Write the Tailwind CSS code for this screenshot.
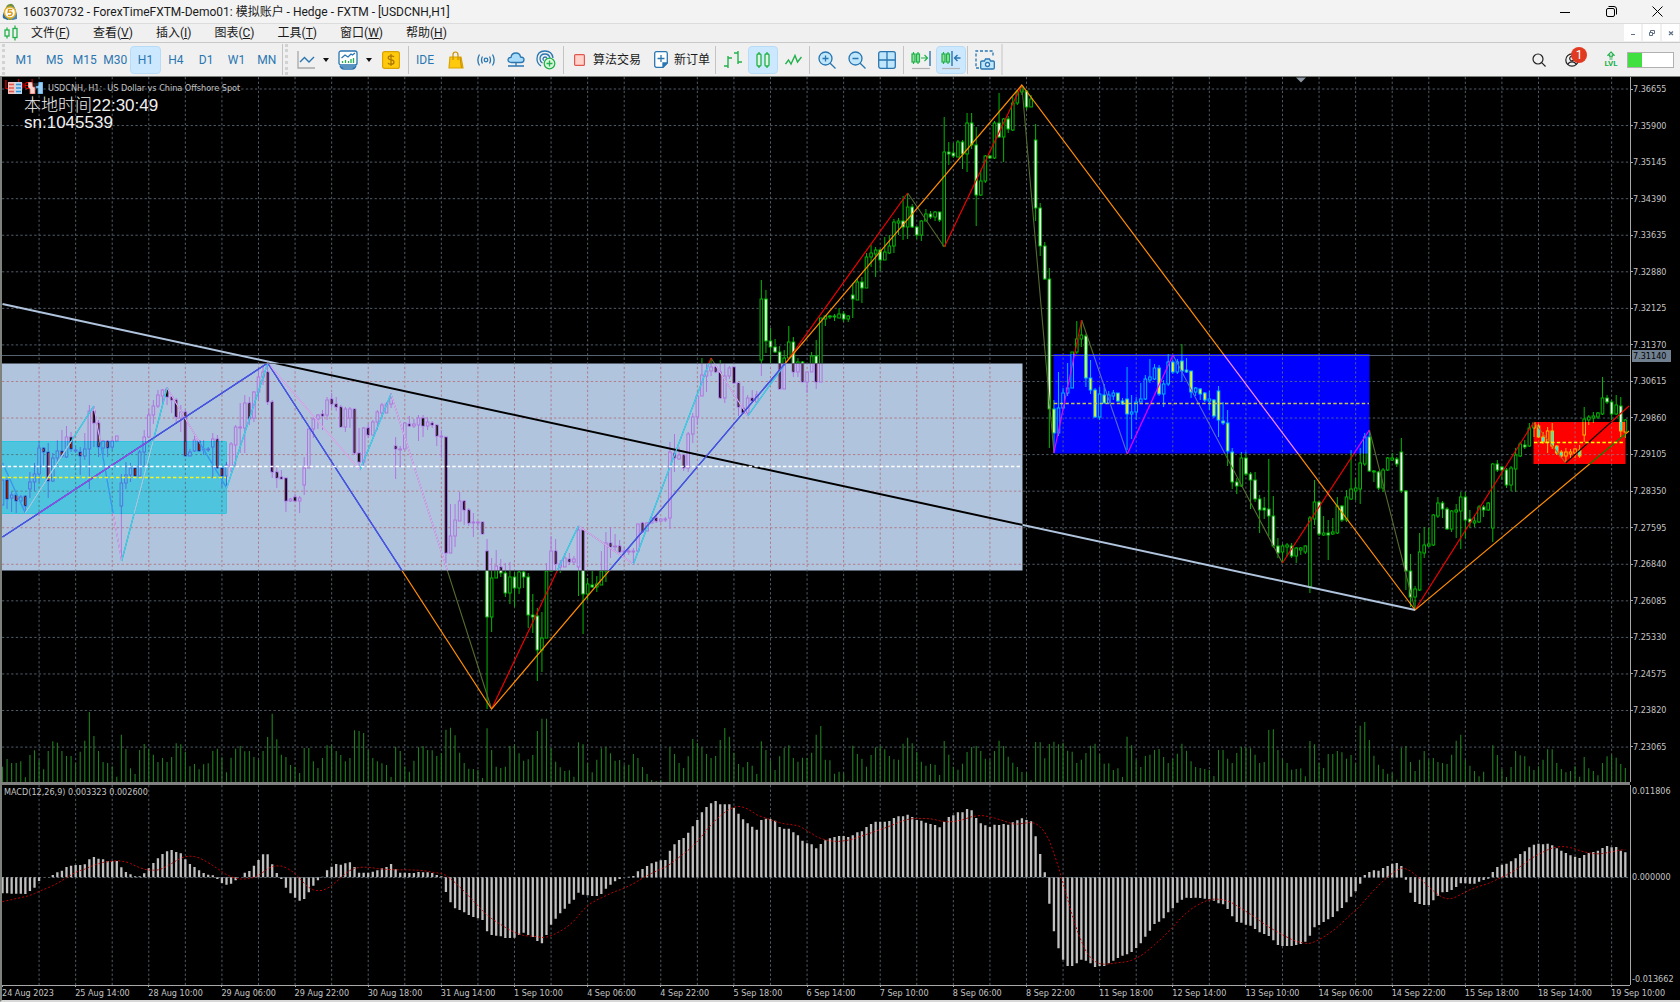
<!DOCTYPE html>
<html lang="zh-CN">
<head>
  <meta charset="UTF-8">
  <meta name="viewport" content="width=device-width, initial-scale=1.0">
  <title>160370732 - ForexTimeFXTM-Demo01: 模拟账户 - Hedge - FXTM - [USDCNH,H1]</title>
  <script src="https://cdn.jsdelivr.net/npm/@tailwindcss/browser@4"></script>
</head>
<body class="h-screen flex flex-col overflow-hidden bg-[#f0f0f0] font-['Roboto','Noto_Sans_CJK_SC',sans-serif] text-xs text-[#1a1a1a]">

  <!-- Title bar -->
  <header class="h-6 shrink-0 flex items-center bg-[#f3f3f3] border-b border-[#dcdcdc] pl-[2px]">
    <svg class="w-4 h-[18px] mr-[5px]" viewBox="0 0 16 18">
      <path d="M3 8 Q4 1 8 1 Q10 0 12 3 Q13 5 14 9 L15 15 Q8 19 1 15 Z" fill="#6f8f3c" />
      <path d="M11 2 Q14 6 15 12 L15 16 L10 17 Z" fill="#4a86b8" />
      <path d="M3 7 Q0 12 1 15 L6 17 L6 9 Z" fill="#2e6da4" />
      <circle cx="8" cy="9.500" r="5.600" fill="#fff" stroke="#e3b02c" stroke-width="1.500" />
      <path d="M10.300 6.400 H6.600 L6.200 9.400 Q10.300 8.300 10.100 10.800 Q9.600 13 6 12.200" fill="none" stroke="#d89a1a" stroke-width="1.500" />
    </svg>
    <h1 class="text-[12px] whitespace-nowrap">160370732 - ForexTimeFXTM-Demo01: 模拟账户 - Hedge - FXTM - [USDCNH,H1]</h1>
    <div class="ml-auto flex h-full">
      <button class="w-[46px] flex items-center justify-center" aria-label="最小化"><svg class="w-[10px] h-[10px]" viewBox="0 0 10 10"><path d="M0 5.500H10" stroke="#000" /></svg></button>
      <button class="w-[46px] flex items-center justify-center" aria-label="还原"><svg class="w-[11px] h-[11px]" viewBox="0 0 11 11" fill="none" stroke="#000"><rect x=".5" y="2.500" width="8" height="8" rx="1.500" /><path d="M2.500 .5H8Q10.500 .5 10.500 3V8.500" /></svg></button>
      <button class="w-[46px] flex items-center justify-center" aria-label="关闭"><svg class="w-[11px] h-[11px]" viewBox="0 0 11 11" stroke="#000"><path d="M.5 .5L10.500 10.500M10.500 .5L.5 10.500" /></svg></button>
    </div>
  </header>

  <!-- Menu bar -->
  <nav class="h-[19px] shrink-0 flex items-center border-b border-[#c8c8c8] pl-1">
    <svg class="w-[14px] h-4 mr-[13px]" viewBox="0 0 14 16" fill="none" stroke="#22b14c" stroke-width="1.300">
      <path d="M3 2.500V5M3 11V13.500M11 .5V3.500M11 12.500V15.500" /><rect x="1" y="5" width="4" height="6" /><rect x="9" y="3.500" width="4" height="9" />
    </svg>
    <div class="flex gap-[23px] whitespace-nowrap">
      <button>文件(<u>F</u>)</button>
      <button>查看(<u>V</u>)</button>
      <button>插入(<u>I</u>)</button>
      <button>图表(<u>C</u>)</button>
      <button>工具(<u>T</u>)</button>
      <button>窗口(<u>W</u>)</button>
      <button>帮助(<u>H</u>)</button>
    </div>
    <div class="ml-auto flex gap-[2px] h-full pr-px">
      <button class="w-[17px] h-[17px] bg-white flex items-center justify-center" aria-label="最小化图表"><svg class="w-2 h-2" viewBox="0 0 8 8"><path d="M2 5.500H6" stroke="#5d7085" /></svg></button>
      <button class="w-[17px] h-[17px] bg-white flex items-center justify-center" aria-label="还原图表"><svg class="w-2 h-2" viewBox="0 0 8 8" fill="none" stroke="#5d7085"><path d="M2.500 3V1.500H6.500V4.500H5M1.500 3.500H4.500V6.500H1.500Z" /></svg></button>
      <button class="w-[17px] h-[17px] bg-white flex items-center justify-center" aria-label="关闭图表"><svg class="w-2 h-2" viewBox="0 0 8 8" stroke="#5d7085" stroke-width="1.300"><path d="M2 2.500L6 6M6 2.500L2 6" /></svg></button>
    </div>
  </nav>

  <!-- Toolbars -->
  <div class="h-[33px] shrink-0 flex items-center">
    <div class="w-[7px] h-[31px] border-l-3 border-dotted border-[#d2d2d2] ml-[2px]"></div>
    <div class="grid grid-cols-9 w-[273px] text-[#2a76b0]">
      <button class="h-7">M1</button>
      <button class="h-7">M5</button>
      <button class="h-7">M15</button>
      <button class="h-7">M30</button>
      <button class="h-7 rounded-sm bg-[#cce8ff] border border-[#b8dcf8]">H1</button>
      <button class="h-7">H4</button>
      <button class="h-7">D1</button>
      <button class="h-7">W1</button>
      <button class="h-7">MN</button>
    </div>
    <div class="w-[9px] h-[31px] border-l border-[#c4c4c4] pl-[2px]"><div class="h-full border-l-3 border-dotted border-[#d2d2d2]"></div></div>

    <button class="w-[30px] flex justify-center" aria-label="折线"><svg class="w-5 h-5" viewBox="0 0 20 20" fill="none"><path d="M2 1V18H19" stroke="#a8a8a8" stroke-width="1.300" /><path d="M4 12L8.500 7.500L13 12L18 7" stroke="#2a76b0" stroke-width="1.400" /></svg></button>
    <button class="w-[10px] flex justify-center" aria-label="更多线型"><svg class="w-[6px] h-1" viewBox="0 0 6 4"><path d="M0 0H6L3 4Z" fill="#111" /></svg></button>
    <button class="w-[33px] flex justify-center" aria-label="指标"><svg class="w-5 h-5" viewBox="0 0 20 20" fill="none" stroke="#2a76b0" stroke-width="1.300"><rect x="1" y="1" width="18" height="14" rx="2" fill="#fff" /><path d="M2 15.500Q3 19 6 19H14Q17 19 18 15.500M3 17H17" /><path d="M3.500 8L7 5L10 7L13 4L14.500 5L17 3" /><path d="M4.500 13V11M7.500 13V10M10.500 13V11M13 13V9M15.500 13V8" stroke="#22b14c" /></svg></button>
    <button class="w-[10px] flex justify-center" aria-label="更多指标"><svg class="w-[6px] h-1" viewBox="0 0 6 4"><path d="M0 0H6L3 4Z" fill="#111" /></svg></button>
    <button class="w-[34px] flex justify-center" aria-label="金额"><svg class="w-[18px] h-[18px]" viewBox="0 0 18 18" fill="none"><rect x=".6" y=".6" width="16.800" height="16.800" rx="2" fill="#ffc90e" stroke="#d9a300" stroke-width="1.200" /><path d="M12 6Q11.500 4.800 9 4.800Q6.200 4.800 6.200 6.800Q6.200 8.500 9 8.900Q12 9.300 12 11.200Q12 13.200 9 13.200Q6.400 13.200 6 11.800M9 3V15" stroke="#a87400" stroke-width="1.200" /></svg></button>
    <div class="w-px h-7 bg-[#c4c4c4]"></div>
    <button class="w-8 text-[#2a76b0]">IDE</button>
    <button class="w-[30px] flex justify-center" aria-label="市场"><svg class="w-4 h-[18px]" viewBox="0 0 16 18" fill="none"><path d="M2 6H13L15 17H1Z" fill="#ffc90e" stroke="#d9a300" stroke-width="1.200" /><path d="M5 9V4Q5 1 7.500 1Q10 1 10 4V9M12 6L13.500 17" stroke="#c99000" stroke-width="1.200" /></svg></button>
    <button class="w-[30px] flex justify-center" aria-label="信号"><svg class="w-[18px] h-3" viewBox="0 0 18 12" fill="none" stroke="#2a76b0" stroke-width="1.300"><circle cx="9" cy="6" r="1.800" /><path d="M5.500 2.500Q3.500 6 5.500 9.500M12.500 2.500Q14.500 6 12.500 9.500M2.500 .5Q-.8 6 2.500 11.500M15.500 .5Q18.800 6 15.500 11.500" /></svg></button>
    <button class="w-[30px] flex justify-center" aria-label="云"><svg class="w-[18px] h-4" viewBox="0 0 18 16" fill="none" stroke="#2a76b0" stroke-width="1.300"><path d="M4.500 10.500Q1 10.500 1 7.800Q1 5.500 4 5.300Q4.500 1 9 1Q13 1 13.500 5Q17 5.200 17 7.800Q17 10.500 14 10.500Z" fill="#a9dcfa" /><path d="M9 10.500V14M1 14H7M11 14H17M7 14H11" /></svg></button>
    <button class="w-[30px] flex justify-center" aria-label="VPS"><svg class="w-5 h-5" viewBox="0 0 20 20" fill="none" stroke="#2a76b0" stroke-width="1.300"><path d="M5 16Q1 13.500 1 9Q1 1 9 1Q16 1 17 8M6.500 13Q4 11.500 4 9Q4 4 9 4Q13 4 14 8M8 10.500Q6.800 10 7 9Q7.200 7 9 7Q10.500 7 11 8.500" /><circle cx="13.500" cy="13.500" r="5.300" fill="#d9f7dc" stroke="#22b14c" /><path d="M13.500 10.500V16.500M10.500 13.500H16.500" stroke="#22b14c" /></svg></button>
    <div class="w-px h-7 bg-[#c4c4c4] ml-[2px] mr-[10px]"></div>
    <button class="flex items-center gap-2 whitespace-nowrap"><svg class="w-[11px] h-3" viewBox="0 0 11 12"><rect x=".6" y=".6" width="9.800" height="10.800" rx="1" fill="#ffd3cc" stroke="#e2574c" stroke-width="1.200" /></svg>算法交易</button>
    <button class="flex items-center gap-[6px] whitespace-nowrap ml-[13px]"><svg class="w-[14px] h-[17px]" viewBox="0 0 14 17" fill="none" stroke="#2a76b0" stroke-width="1.300"><path d="M2.500 .7H11.500Q13.300 .7 13.300 2.500V12L9 16.300H2.500Q.7 16.300 .7 14.500V2.500Q.7 .7 2.500 .7Z" fill="#fff" /><path d="M7 4V11M3.500 7.500H10.500" /><path d="M13 12L9 16V12Z" fill="#2a76b0" /></svg>新订单</button>
    <div class="w-px h-7 bg-[#c4c4c4] ml-[5px] mr-[2px]"></div>
    <button class="w-[30px] flex justify-center" aria-label="柱状图"><svg class="w-[18px] h-[17px]" viewBox="0 0 18 17" fill="none" stroke="#22b14c" stroke-width="1.400"><path d="M4 5V17M4 7H8M0 15H4M14 0V13M10 2H14M14 11H18" /></svg></button>
    <button class="w-[30px] h-7 flex items-center justify-center rounded-sm bg-[#cce8ff] border border-[#b8dcf8]" aria-label="蜡烛图"><svg class="w-[14px] h-4" viewBox="0 0 14 16" fill="none" stroke="#22b14c" stroke-width="1.300"><path d="M3 0V2M3 14V16M11 0V2M11 14V16" /><rect x="1" y="2" width="4" height="12" rx="1" fill="#dff5df" /><rect x="9" y="2" width="4" height="12" rx="1" fill="#dff5df" /></svg></button>
    <button class="w-[30px] flex justify-center" aria-label="线图"><svg class="w-[17px] h-3" viewBox="0 0 17 12" fill="none" stroke="#22b14c" stroke-width="1.400"><path d="M.5 10L3.500 6L6 10L10 1.500L12.500 8L16.500 3" /></svg></button>
    <div class="w-px h-7 bg-[#c4c4c4] ml-px mr-[2px]"></div>
    <button class="w-[30px] flex justify-center" aria-label="放大"><svg class="w-[18px] h-[18px]" viewBox="0 0 18 18" fill="none" stroke="#2a76b0" stroke-width="1.300"><circle cx="7.500" cy="7.500" r="6.500" fill="#bfe6fb" /><path d="M12.200 12.200L17.500 17.500M4.500 7.500H10.500M7.500 4.500V10.500" /></svg></button>
    <button class="w-[30px] flex justify-center" aria-label="缩小"><svg class="w-[18px] h-[18px]" viewBox="0 0 18 18" fill="none" stroke="#2a76b0" stroke-width="1.300"><circle cx="7.500" cy="7.500" r="6.500" fill="#bfe6fb" /><path d="M12.200 12.200L17.500 17.500M4.500 7.500H10.500" /></svg></button>
    <button class="w-[30px] flex justify-center" aria-label="平铺窗口"><svg class="w-[18px] h-[18px]" viewBox="0 0 18 18" fill="none" stroke="#2a76b0" stroke-width="1.300"><rect x=".7" y=".7" width="16.600" height="16.600" rx="2" fill="#bfe6fb" /><path d="M9 1V17M1 9H17" /></svg></button>
    <div class="w-px h-7 bg-[#c4c4c4] ml-px mr-[2px]"></div>
    <button class="w-[30px] flex justify-center" aria-label="自动滚动"><svg class="w-5 h-5" viewBox="0 0 20 20" fill="none" stroke="#22b14c" stroke-width="1.200"><path d="M2.500 2V4M2.500 12V14M7 2V4M7 12V14" /><rect x="1" y="4" width="3" height="8" fill="#8fe09a" /><rect x="5.500" y="4" width="3" height="8" fill="#8fe09a" /><path d="M10 8H16M13.500 5L16.500 8L13.500 11" /><path d="M19 1V16" stroke="#2a76b0" stroke-width="1.400" /><path d="M1 18.500H19" stroke="#b4b4b4" /></svg></button>
    <button class="w-[30px] h-7 flex items-center justify-center rounded-sm bg-[#cce8ff] border border-[#b8dcf8]" aria-label="图表平移"><svg class="w-5 h-5" viewBox="0 0 20 20" fill="none" stroke="#22b14c" stroke-width="1.200"><path d="M2.500 2V4M2.500 12V14M7 2V4M7 12V14" /><rect x="1" y="4" width="3" height="8" fill="#8fe09a" /><rect x="5.500" y="4" width="3" height="8" fill="#8fe09a" /><path d="M11 1V16M19.500 8H13.500M16.500 5L13.500 8L16.500 11" stroke="#2a76b0" stroke-width="1.400" /><path d="M1 18.500H19" stroke="#b4b4b4" /></svg></button>
    <div class="w-px h-7 bg-[#c4c4c4] ml-px mr-[2px]"></div>
    <button class="w-[30px] flex justify-center" aria-label="截图"><svg class="w-5 h-5" viewBox="0 0 20 20" fill="none" stroke="#2a76b0" stroke-width="1.300"><path d="M4 18H1V1H18V7" stroke-dasharray="3 1.800" /><path d="M7 11H9.500L10.500 9H14.500L15.500 11H18Q19.300 11 19.300 12V18Q19.300 19 18 19H7Q5.700 19 5.700 18V12Q5.700 11 7 11Z" fill="#bfe6fb" /><circle cx="12.500" cy="14.500" r="2" fill="#fff" /></svg></button>
    <div class="w-[2px] h-[31px] bg-[#dadada] ml-px"></div>

    <div class="ml-auto flex items-center pr-[6px]">
      <button class="w-8 flex justify-center" aria-label="搜索"><svg class="w-[14px] h-[14px]" viewBox="0 0 14 14" fill="none" stroke="#222" stroke-width="1.200"><circle cx="6" cy="6" r="5" /><path d="M9.700 9.700L13.500 13.500" /></svg></button>
      <button class="relative w-[33px] flex justify-center" aria-label="通知">
        <svg class="w-[14px] h-[14px]" viewBox="0 0 14 14" fill="none" stroke="#222" stroke-width="1.200"><circle cx="7" cy="7" r="6.200" /><circle cx="7" cy="5.500" r="2.300" /><path d="M2.800 11.500Q4 8.800 7 8.800Q10 8.800 11.200 11.500" /></svg>
        <span class="absolute left-[16px] -top-[6px] w-4 h-4 rounded-full bg-[#e13a22] text-white text-[12px] leading-4 text-center">1</span>
      </button>
      <button class="ml-[11px] w-[24px] flex flex-col items-center text-[#22b14c]" aria-label="等级">
        <svg class="w-2 h-[9px]" viewBox="0 0 8 9" fill="none" stroke="#22b14c" stroke-width="1.200"><path d="M4 1L7.200 4.200H5.200V5.800H2.800V4.200H.8ZM2.500 8H5.500" /></svg>
        <span class="text-[8px] leading-2 font-bold">LVL</span>
      </button>
      <div class="ml-1 w-[47px] h-4 border border-[#b0b0b0] bg-white"><div class="h-full w-[14px] bg-[#3fe03f]"></div></div>
    </div>
  </div>

  <!-- Chart window -->
  <main class="flex-1 min-h-0 flex flex-col bg-black border-t border-l-2 border-[#7d827d] border-b-2 border-b-[#d8d8d8] font-['DejaVu_Sans_Condensed','DejaVu_Sans',sans-serif] text-[9px] leading-3 text-[#c4c4c4]">
    <section class="flex-[705_1_0] min-h-0 flex">
      <div class="relative flex-1 min-w-0">
        <svg id="priceChart" class="absolute inset-0 w-full h-full" viewBox="2 77 1628 705" preserveAspectRatio="none"></svg>
        <div class="relative pt-[5px] pl-[2px]">
          <div class="relative flex items-center h-3">
            <span class="absolute left-0 -top-[3px] text-[12px] text-[#e00000]">Label</span>
            <svg class="relative w-[14px] h-3 ml-1" viewBox="0 0 14 12"><rect width="14" height="12" rx="1" fill="#f4f4f4" /><rect width="7" height="12" rx="1" fill="#f6c2bd" /><rect x="7" width="7" height="12" rx="1" fill="#b9dcf4" /><path d="M1 2.500H6M1 6H6M1 9.500H6" stroke="#e2574c" stroke-width="1.500" /><path d="M8 2.500H13M8 6H13M8 9.500H13" stroke="#3a8fd0" stroke-width="1.500" /></svg>
            <svg class="relative w-[15px] h-3 ml-[6px]" viewBox="0 0 15 12"><path d="M0 0H4L5 5H7V12H2V7L0 5Z" fill="#f8d5cf" stroke="#e2574c" stroke-width=".8" /><path d="M15 0H11L10 4H8V6H10V12H15Z" fill="#9bd0f5" stroke="#3a8fd0" stroke-width=".8" /><path d="M5 1H10V4H5Z" fill="#222" /></svg>
            <span class="ml-[5px] whitespace-pre">USDCNH, H1:  US Dollar vs China Offshore Spot</span>
          </div>
          <p class="pl-5 pt-[3px] font-['Liberation_Sans','Noto_Sans_CJK_SC',sans-serif] text-[17px] leading-[17px] text-[#f0f0f0]"><span class="font-light">本地时间</span>22:30:49<br>sn:1045539</p>
        </div>
      </div>
      <div class="relative w-[50px] border-l border-[#a8a8a8] flex flex-col justify-between pt-[6px] pb-[29px]">
        <div id="priceLabels" class="contents"></div>
        <span class="absolute left-px top-[38.700%] w-[39px] h-3 bg-[#708090] text-black pl-px">7.31140</span>
      </div>
    </section>
    <div class="h-[3px] shrink-0 bg-[#808080] mr-[50px]"></div>
    <section class="flex-[200_1_0] min-h-0 flex">
      <div class="relative flex-1 min-w-0">
        <svg id="macdChart" class="absolute inset-0 w-full h-full" viewBox="2 785 1628 200" preserveAspectRatio="none"></svg>
        <span class="relative block pl-[2px] pt-px">MACD(12,26,9) 0.003323 0.002600</span>
      </div>
      <div class="relative w-[50px] border-l border-[#a8a8a8] pl-px flex flex-col justify-between">
        <span>0.011806</span>
        <span class="absolute top-[43%]">0.000000</span>
        <span>-0.013662</span>
      </div>
    </section>
    <div class="h-[15px] shrink-0 mr-[50px] border-t border-[#a8a8a8]">
      <div id="timeLabels" class="flex whitespace-nowrap"></div>
    </div>
  </main>

  <script>
    const BAR_STEP = 4.5714;
    const barX = i => 2.5 + BAR_STEP * i;

    // One entry per H1 bar: high, body top, body bottom, low; "d" marks a bearish bar
    const CANDLES = `
480 480 505 505,478 480 499 509 d,492 495 498 512,493 495 501 513 d,495 497 501 503,495 496 506 513 d,472 482 489 498,463 474 482 491,442 448 474 482,447 448 452 467 d,
443 452 481 498 d,453 458 481 482,440 451 458 465,430 451 456 458 d,426 437 457 458,432 437 449 452 d,447 450 451 453 d,447 452 456 475 d,433 449 456 460,405 411 449 489,
406 411 423 447 d,420 423 447 457 d,440 441 448 455,440 441 448 457 d,438 441 447 450,436 436 441 441,474 483 506 561,462 475 483 489,463 468 475 482,465 468 476 478 d,
450 452 476 478,430 437 452 467,409 415 437 437,400 406 415 424,390 395 406 408,389 390 396 407,387 389 397 405 d,395 397 400 413 d,398 400 417 424 d,405 412 418 432,
409 412 456 456 d,449 452 456 456,436 440 451 452,440 441 451 452 d,440 449 450 455 d,447 449 450 452 d,433 439 447 478,435 439 468 469 d,467 468 476 487 d,462 465 476 488,
442 444 466 472,425 427 445 466,403 427 428 453 d,395 403 428 453,397 403 419 425 d,391 392 418 422,368 377 392 400,365 372 377 385,364 372 402 405 d,400 402 472 478 d,
466 472 478 488 d,470 477 479 479 d,478 478 501 512 d,498 499 501 502,494 497 501 502 d,496 498 501 513,457 468 485 495,429 429 468 468,417 419 429 438,414 415 419 429,
410 414 416 430 d,397 400 415 420,393 399 404 408 d,397 404 407 411 d,405 407 427 427 d,407 409 427 432,407 409 418 428,409 409 453 455 d,428 453 462 466 d,427 428 462 467,
424 428 435 438 d,420 422 435 435,410 412 422 430,403 405 413 419,402 404 413 413,393 398 404 408,437 446 449 479 d,446 449 450 467 d,422 423 449 449,416 424 426 427 d,
419 424 426 428,415 418 425 441,415 418 426 437 d,417 422 426 430,421 423 425 428 d,425 425 436 446 d,430 436 437 458 d,437 437 553 563 d,504 536 553 553,504 520 536 547,
492 501 521 521,500 501 510 525 d,508 510 523 526 d,513 522 523 537 d,521 522 523 530,522 522 534 534 d,539 551 617 709 d,558 578 617 632,550 566 578 578,559 567 573 577 d,
563 573 593 597 d,562 577 593 604,572 577 588 607 d,570 572 588 594,570 572 577 588 d,573 577 615 628 d,594 615 617 633 d,608 616 650 681 d,612 638 650 672,563 571 638 638,
536 551 571 571,539 551 564 570 d,560 564 567 573,553 558 567 567,553 559 562 565 d,556 559 562 565,526 530 567 596,530 530 594 634 d,578 584 594 600,570 585 587 588 d,
576 584 587 592,551 571 585 585,532 543 571 582,527 543 547 558 d,534 546 547 552 d,540 546 552 553 d,547 551 552 556,548 551 552 555 d,548 551 552 564 d,524 524 551 551,
522 523 532 533 d,522 523 531 531,515 518 523 523,515 518 521 523 d,518 519 521 523,517 519 520 522 d,442 452 518 529,434 453 458 472 d,447 455 459 460,455 455 468 471 d,
432 434 468 472,413 417 434 443,392 396 417 425,358 375 396 396,363 371 376 392,358 367 371 376,366 367 372 373 d,360 372 398 399 d,363 376 398 403,366 368 376 379,
367 367 383 384 d,383 383 407 416 d,386 408 413 414 d,395 398 413 416,390 398 401 402 d,391 395 402 402,280 299 360 376,290 299 341 353 d,328 341 347 363 d,339 347 352 353 d,
346 352 389 389 d,350 358 389 389,326 342 358 358,337 342 372 377 d,358 362 372 377,361 362 382 382 d,372 372 382 393,352 356 372 372,340 356 382 389 d,318 318 382 382,
316 316 319 326,315 316 317 319 d,314 316 317 321 d,308 314 318 318,311 314 319 322 d,315 316 319 322,283 295 299 318 d,279 282 300 300,277 282 288 303 d,253 257 288 288,
245 253 257 267,247 250 254 277,249 250 260 271 d,237 252 260 260,235 246 253 254,219 222 246 253,218 221 223 235,196 221 227 240 d,193 207 227 239,204 207 227 228 d,
226 227 235 239 d,220 221 235 241,209 214 221 221,211 214 217 219 d,211 212 217 221,212 212 220 222 d,117 152 246 246,142 152 154 165 d,143 153 156 158 d,140 142 157 157,
140 142 154 169 d,113 123 154 172,113 123 145 149 d,127 145 195 226 d,170 181 195 196,155 156 181 183,155 156 158 159 d,121 123 158 159,93 123 137 138 d,118 119 137 162,
116 119 129 133 d,97 103 130 131,90 92 103 105,85 87 92 95,90 91 107 110 d,95 99 107 107,124 140 208 221 d,203 208 246 256 d,242 246 279 280 d,268 279 409 448 d,
400 409 433 453 d,372 408 433 436,388 393 408 409,363 388 393 396,352 352 388 388,321 339 352 354,321 335 339 347,334 336 378 387 d,360 378 390 394 d,388 390 417 418 d,
387 394 417 420,384 395 403 404 d,391 395 403 404,390 393 396 400,393 393 401 402 d,398 401 404 405 d,367 399 414 450 d,395 412 414 439,397 402 412 420,383 399 402 402,
375 379 399 400,359 377 380 383,364 368 379 380,365 368 394 396 d,380 384 394 407,354 362 384 386,360 362 372 374 d,359 362 372 374,344 361 371 382 d,358 370 372 373 d,
371 371 392 398 d,387 388 392 396,388 389 394 400 d,392 393 400 402 d,391 399 401 410,399 400 416 418 d,386 391 420 437 d,402 421 423 425 d,410 423 451 466 d,448 452 482 489 d,
478 482 486 494 d,452 458 486 487,452 458 474 476 d,472 474 480 509 d,472 480 499 502 d,495 499 510 533 d,497 508 510 519 d,459 509 516 536 d,496 516 546 548 d,538 546 553 558 d,
544 546 552 563,543 545 547 556,543 546 556 558 d,547 548 556 563,547 548 550 555,545 546 552 554,516 518 587 593,480 502 519 525,501 502 534 536 d,516 533 535 536,
520 533 535 560 d,518 532 534 535,497 506 533 534,505 506 520 522 d,490 497 520 522,450 489 499 500,478 488 491 500,448 463 489 504,433 437 464 466,430 437 471 472 d,
470 471 472 482 d,471 472 488 490 d,468 470 488 492,457 458 470 471,453 458 460 461,457 459 464 467 d,438 452 491 493 d,490 491 571 590 d,554 571 597 607 d,586 589 597 610,
533 552 590 591,527 545 553 558,528 544 546 547,514 515 545 546,497 503 516 518,501 503 509 518 d,507 509 529 530 d,510 511 529 532,504 510 512 538,492 497 511 549,
492 497 520 538 d,510 519 522 528 d,515 521 523 527,505 507 522 523,505 507 510 517 d,502 503 510 511,463 464 528 542,460 464 470 472 d,466 467 470 480 d,468 470 485 488 d,
466 468 485 491,448 455 469 492,442 444 456 457,440 445 447 449 d,423 428 446 447,422 423 428 437,424 426 437 438 d,432 437 442 444 d,427 431 442 453,423 431 446 449 d,
445 446 453 455 d,450 452 456 458 d,448 452 456 463,449 452 454 458,448 449 453 458,445 450 456 458 d,407 419 435 442,415 417 420 425,412 416 418 423,412 413 417 419,
377 398 414 415,395 398 402 404 d,400 402 414 420 d,395 405 414 415,397 406 431 437 d,419 420 432 438`.trim().split(',');

    // Tick volumes, as distance down from the top of the volume band (base line = 279)
    const VOLUME_BASE = 279;
    const VOLUMES = [230,
      207,219,219,214,262,195,181,209,238,183,154,158,183,198,198,218,185,152,66,138,183,216,219,229,260,134,177,235,252,180,
      162,178,194,216,204,216,201,160,163,185,229,222,238,223,220,183,176,202,247,203,176,168,184,183,201,209,183,141,71,148,
      194,201,225,230,249,174,174,214,234,204,166,166,183,195,214,204,121,123,129,180,204,214,220,225,261,170,183,229,245,212,
      172,168,180,181,198,190,119,113,136,188,219,236,237,240,264,115,180,230,234,230,168,166,190,212,208,195,123,86,86,174,
      215,232,243,241,260,157,163,219,247,209,175,170,190,212,210,224,224,192,204,231,252,270,273,270,276,172,192,219,234,199,
      147,159,172,192,204,198,150,114,140,188,222,232,216,227,252,154,180,211,240,199,174,166,204,215,203,204,188,134,108,209,
      211,251,245,250,272,167,192,206,230,195,172,168,178,198,208,209,161,143,160,185,215,227,222,224,255,153,194,230,239,221,
      186,171,168,183,206,209,183,152,168,200,218,231,246,247,271,156,157,205,162,155,163,158,182,185,219,209,189,167,161,193,
      221,220,240,235,261,140,166,209,231,198,194,180,177,201,219,207,191,161,182,214,231,234,237,240,258,180,180,206,219,189,
      170,172,175,194,219,216,120,118,180,206,219,239,237,235,259,153,163,219,234,192,192,183,187,206,195,219,107,96,150,197,
      224,237,251,249,269,174,168,216,243,209,183,209,204,216,219,222,194,152,134,209,227,243,259,245,275,166,195,237,261,231,
      183,196,199,229,240,229,209,178,178,219,237,247,243,229,260,201,235,243,256,219,199,194,203,222,234];

    // MACD histogram ends, zero line = 562
    const MACD_ZERO = 562;
    const MACD = [
      610,610,611,611,611,612,603,593,573,562,562,555,547,542,531,527,525,525,523,508,501,506,508,513,513,513,532,546,553,559,559,
      550,535,519,505,492,484,480,486,490,508,522,531,541,549,554,556,567,579,584,581,571,562,548,543,527,510,493,493,523,549,
      567,593,610,623,632,627,607,587,571,560,541,530,522,524,520,517,531,548,548,548,545,541,535,531,522,538,548,548,549,549,
      546,547,547,549,555,559,606,637,655,660,667,675,681,685,690,724,735,737,739,744,744,743,735,728,735,741,753,760,735,704,
      686,670,656,641,629,608,614,616,618,618,612,596,584,574,567,562,560,558,544,537,528,520,515,511,510,482,463,450,444,428,
      409,390,367,351,340,333,343,343,343,353,371,388,400,410,419,390,386,387,392,411,416,416,427,436,452,460,463,475,462,451,
      445,441,438,438,441,436,427,424,411,402,395,395,395,393,384,379,379,374,381,390,392,398,402,405,412,396,381,376,367,367,
      357,361,384,400,406,411,404,405,402,404,397,391,385,390,394,439,492,547,641,724,775,809,828,828,820,809,812,820,831,828,
      828,820,812,804,797,793,786,774,760,740,722,702,695,685,667,655,638,629,623,624,623,624,626,628,632,640,643,657,679,696,
      698,704,707,717,727,732,738,751,765,768,768,768,765,762,755,737,712,705,696,688,681,664,654,637,620,604,581,555,546,541,
      542,534,528,521,519,528,569,608,636,642,645,645,631,617,607,606,600,591,580,580,581,581,575,570,566,546,531,524,521,514,
      505,492,484,472,464,461,463,461,466,475,482,489,496,500,504,495,489,486,482,474,468,472,471,482,487];

    const ZIGZAG = [[2.5,463],[25.3,513],[93.8,406],[121.700,561],[167,388],[226.700,488],[267.700,363],[360,470],[391,394],[491.600,709],
      [578.4,526],[633.4,564],[711,358],[747.700,416],[907.700,193],[944.3,247],[1021.8,85],[1053.9,453],[1081.700,320],[1127.3,454],
      [1173,355],[1282.4,563],[1369.4,430],[1415.1,610],[1533.9,422],[1565.700,463],[1629,406]];
    const SWING = 'M2.5 537L267.7 363L491.6 709L1021.8 85L1415.1 610L1629 431';

    const verticals = (top, bottom) => {
      let d = '';
      for (let i = 8; i < 356; i += 8) d += `M${barX(i)} ${top}V${bottom}`;
      return d;
    };

    function drawPriceChart() {
      let grid = verticals(77, 782);
      for (let k = 0; k < 19; k++) grid += `M2 ${89 + k * 36.56}H1630`;

      const candles = CANDLES.map((row, i) => {
        const [high, top, bottom, low, bearish] = row.trim().split(' ');
        const x = barX(i);
        const height = Math.max(bottom - top, 1);
        return `<path d="M${x} ${high}V${top}M${x} ${bottom}V${low}"/>` +
          `<rect x="${x - 1.3}" y="${top}" width="2.6" height="${height}" fill="${bearish ? '#fff' : '#000'}"/>`;
      }).join('');

      const volumes = VOLUMES.map((v, i) => `M${barX(i)} 783V${783 - (VOLUME_BASE - v) / 3}`).join('');

      let rising = '';
      let falling = '';
      for (let i = 1; i < ZIGZAG.length; i++) {
        const segment = `M${ZIGZAG[i - 1]}L${ZIGZAG[i]}`;
        if (ZIGZAG[i][1] < ZIGZAG[i - 1][1]) rising += segment;
        else falling += segment;
      }

      document.getElementById('priceChart').innerHTML = `
        <clipPath id="wideBox"><rect x="2" y="363.5" width="1020.5" height="207"/></clipPath>
        <clipPath id="leftBox"><rect x="2" y="441.5" width="224.5" height="72"/></clipPath>
        <g style="isolation:isolate" fill="none">
          <rect x="2" y="77" width="1628" height="705" fill="#000"/>
          <path d="${grid}" stroke="#505c68" stroke-dasharray="2.3 2.3"/>
          <path d="${volumes}" stroke="#1f7f1f" stroke-width="1.1"/>
          <path d="M2 355.5H1630" stroke="#56626e"/>
          <g stroke="#00b800">${candles}</g>
          <rect x="2" y="363.5" width="1020.5" height="207" fill="#000"/>
          <g clip-path="url(#wideBox)">
            <path d="${grid}" stroke="#004a58" stroke-dasharray="2.3 2.3"/>
            <g stroke="#005000">${candles}</g>
          </g>
          <path d="${falling}" stroke="#556b2f" stroke-width="1.1"/>
          <path d="${rising}" stroke="#f00000" stroke-width="1.2"/>
          <path d="${SWING}" stroke="#ff8c00" stroke-width="1.2"/>
          <path d="M2.5 304L1415.1 610" stroke="#b0c4de" stroke-width="2"/>
          <g style="mix-blend-mode:difference">
            <rect x="1053.5" y="354" width="316" height="99.5" fill="#0000ff"/>
            <rect x="1533.5" y="422" width="92" height="42" fill="#ff0000"/>
          </g>
          <rect x="2" y="441.5" width="224.5" height="72" fill="#ff0000" style="mix-blend-mode:difference"/>
          <rect x="2" y="363.5" width="1020.5" height="207" fill="#b0c4de" style="mix-blend-mode:difference"/>
          <g stroke-width="1.2" clip-path="url(#wideBox)">
            <path d="${falling}" stroke="#dfb0ec"/>
            <path d="${rising}" stroke="#58c4de"/>
            <path d="${SWING}" stroke="#5a50de"/>
          </g>
          <g stroke-width="1.2" clip-path="url(#leftBox)">
            <path d="${falling}" stroke="#1aa0ee"/>
            <path d="${rising}" stroke="#b0c4de"/>
            <path d="${SWING}" stroke="#a048de"/>
          </g>
          <g stroke-dasharray="3.4 2.3" stroke-width="1.4">
            <path d="M2 466.5H1022" stroke="#fff"/>
            <path d="M2 477.5H226" stroke="#f4f420"/>
            <path d="M1054 403.5H1369" stroke="#c8c850"/>
            <path d="M1534 442.5H1625" stroke="#ffff00"/>
          </g>
          <path d="M1296 77.5H1306L1301 82.500Z" fill="#8a96a2"/>
        </g>`;
    }

    function drawMacdChart() {
      const y = v => 690 + v / 3;
      const bars = MACD.map((v, i) => `M${barX(i)} ${y(MACD_ZERO)}V${y(v)}`).join('');
      // 9-period simple average
      const history = Array(8).fill(638).concat(MACD);
      const signal = MACD.map((_, i) => {
        const mean = history.slice(i, i + 9).reduce((a, b) => a + b, 0) / 9;
        return `${barX(i)},${y(mean)}`;
      }).join(' ');
      document.getElementById('macdChart').innerHTML = `
        <path d="${verticals(785, 985)}M2 877.5H1630" stroke="#505c68" stroke-dasharray="2.3 2.3"/>
        <path d="${bars}" stroke="#c0c0c0" stroke-width="2.3"/>
        <polyline points="${signal}" fill="none" stroke="#c00000" stroke-width="1" stroke-dasharray="2 2"/>`;
    }

    function fillLabels() {
      let prices = '';
      for (let k = 0; k < 19; k++) {
        prices += `<span class="flex items-center"><i class="w-[2px] h-px bg-[#a8a8a8]"></i>${(7.36655 - k * 0.00755).toFixed(5)}</span>`;
      }
      document.getElementById('priceLabels').innerHTML = prices;

      const times = ['24 Aug 2023', '25 Aug 14:00', '28 Aug 10:00', '29 Aug 06:00', '29 Aug 22:00', '30 Aug 18:00', '31 Aug 14:00', '1 Sep 10:00',
        '4 Sep 06:00', '4 Sep 22:00', '5 Sep 18:00', '6 Sep 14:00', '7 Sep 10:00', '8 Sep 06:00', '8 Sep 22:00', '11 Sep 18:00',
        '12 Sep 14:00', '13 Sep 10:00', '14 Sep 06:00', '14 Sep 22:00', '15 Sep 18:00', '18 Sep 14:00', '19 Sep 10:00'];
      document.getElementById('timeLabels').innerHTML = times
        .map(t => `<span class="shrink-0 before:block before:w-px before:h-px before:bg-[#a8a8a8]" style="width:${BAR_STEP * 16 / 1628 * 100}%">${t}</span>`)
        .join('');
    }

    drawPriceChart();
    drawMacdChart();
    fillLabels();
  </script>
</body>
</html>
